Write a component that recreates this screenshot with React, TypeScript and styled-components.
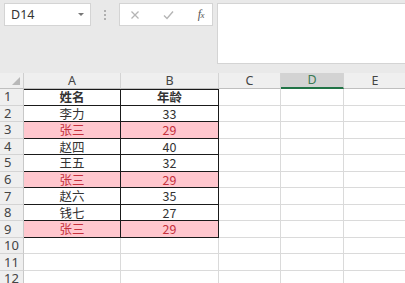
import React from 'react';
import styled, { createGlobalStyle } from 'styled-components';

const GlobalStyle = createGlobalStyle`
  html, body {
    margin: 0;
    padding: 0;
    background: #ffffff;
    overflow: hidden;
  }
  * { box-sizing: border-box; }
`;

const Page = styled.div`
  width: 405px;
  height: 283px;
  overflow: hidden;
  background: #e9e9e9;
  font-family: "Noto Sans CJK SC", "Noto Sans", sans-serif;
`;

const Toolbar = styled.div`
  display: flex;
  align-items: flex-start;
  height: 73px;
  padding: 3px 0 0 4px;
`;

const NameBox = styled.div`
  width: 87px;
  height: 23px;
  background: #fff;
  border: 1px solid #d4d4d4;
  display: flex;
  align-items: center;
  justify-content: space-between;
  padding: 0 6px 0 6px;
  font-family: "Noto Sans", sans-serif;
  font-size: 12.5px;
  color: #333;
`;

const Caret = styled.span`
  width: 0;
  height: 0;
  border-left: 3.5px solid transparent;
  border-right: 3.5px solid transparent;
  border-top: 3.5px solid #777;
`;

const Grip = styled.div`
  width: 28px;
  height: 23px;
  display: flex;
  flex-direction: column;
  align-items: center;
  justify-content: center;
  gap: 2px;
`;

const GripDot = styled.span`
  width: 2px;
  height: 2px;
  background: #b0b0b0;
`;

const IconBox = styled.div`
  width: 94px;
  height: 23px;
  background: #fff;
  border: 1px solid #d4d4d4;
  display: flex;
  align-items: center;
  justify-content: space-between;
  padding: 0 8px 0 10px;
  margin-right: 4px;
`;

const Fx = styled.span`
  font-family: "Liberation Serif", serif;
  font-style: italic;
  font-size: 12px;
  color: #555;
  letter-spacing: -0.5px;
  & small { font-size: 9px; }
`;

const FormulaInput = styled.div`
  flex: 1;
  height: 61px;
  background: #fff;
  border: 1px solid #d4d4d4;
  margin-right: -2px;
`;

const Sheet = styled.div`
  display: grid;
  grid-template-columns: 24px 97px 98px 62px 63px 63px;
  grid-template-rows: 16px repeat(12, 16.55px);
  background: #fff;
`;

const Corner = styled.div`
  background: #efefef;
  border-right: 1px solid #cfcfcf;
  border-bottom: 1px solid #bfbfbf;
  position: relative;
  &::after {
    content: '';
    position: absolute;
    right: 3px;
    bottom: 3px;
    width: 0;
    height: 0;
    border-left: 8px solid transparent;
    border-bottom: 8px solid #b8b8b8;
  }
`;

const ColHead = styled.div<{ $active?: boolean }>`
  background: ${p => (p.$active ? '#d3d3d3' : '#efefef')};
  border-right: 1px solid #d4d4d4;
  border-bottom: ${p => (p.$active ? '2px solid #217346' : '1px solid #bfbfbf')};
  display: flex;
  align-items: center;
  justify-content: center;
  font-family: "Noto Sans", sans-serif;
  font-size: 12.5px;
  line-height: 1;
  padding-top: 1px;
  color: ${p => (p.$active ? '#3b7a55' : '#444')};
`;

const RowHead = styled.div`
  background: #efefef;
  border-right: 1px solid #c8c8c8;
  border-bottom: 1px solid #d4d4d4;
  display: flex;
  align-items: center;
  padding-left: 4px;
  font-family: "Noto Sans", sans-serif;
  font-size: 13px;
  line-height: 1;
  color: #444;
`;

const Cell = styled.div<{ $boxed?: boolean; $hit?: boolean; $bold?: boolean; $top?: boolean }>`
  background: ${p => (p.$hit ? '#ffc7ce' : '#fff')};
  color: ${p => (p.$hit ? '#c5303c' : '#333')};
  font-weight: ${p => (p.$bold ? 700 : 400)};
  border-right: 1px solid ${p => (p.$boxed ? '#1a1a1a' : '#dadada')};
  border-bottom: 1px solid ${p => (p.$boxed ? '#1a1a1a' : '#dadada')};
  box-shadow: ${p => (p.$top ? 'inset 0 1px 0 #1a1a1a' : 'none')};
  display: flex;
  align-items: center;
  justify-content: center;
  font-size: 12.5px;
  line-height: 1;
  padding-top: 1px;
`;

const columns = ['A', 'B', 'C', 'D', 'E'];

const people: [string, string][] = [
  ['姓名', '年龄'],
  ['李力', '33'],
  ['张三', '29'],
  ['赵四', '40'],
  ['王五', '32'],
  ['张三', '29'],
  ['赵六', '35'],
  ['钱七', '27'],
  ['张三', '29'],
];

export default function App() {
  const rows = Array.from({ length: 12 }, (_, i) => i);

  return (
    <Page>
      <GlobalStyle />
      <Toolbar>
        <NameBox>
          <span>D14</span>
          <Caret />
        </NameBox>
        <Grip>
          <GripDot />
          <GripDot />
          <GripDot />
        </Grip>
        <IconBox>
          <svg width="10" height="10" viewBox="0 0 10 10">
            <path d="M1.5 1.5 L8.5 8.5 M8.5 1.5 L1.5 8.5" stroke="#b5b5b5" strokeWidth="1.3" fill="none" />
          </svg>
          <svg width="11" height="10" viewBox="0 0 11 10">
            <path d="M1 5.5 L4 8.5 L10 1.5" stroke="#b5b5b5" strokeWidth="1.4" fill="none" />
          </svg>
          <Fx>f<small>x</small></Fx>
        </IconBox>
        <FormulaInput />
      </Toolbar>
      <Sheet>
        <Corner />
        {columns.map(c => (
          <ColHead key={c} $active={c === 'D'}>{c}</ColHead>
        ))}
        {rows.map(i => {
          const data = people[i];
          const hit = data ? data[0] === '张三' : false;
          return (
            <React.Fragment key={i}>
              <RowHead>{i + 1}</RowHead>
              <Cell $boxed={!!data} $hit={hit} $bold={i === 0} $top={i === 0}>{data ? data[0] : ''}</Cell>
              <Cell $boxed={!!data} $hit={hit} $bold={i === 0} $top={i === 0}>{data ? data[1] : ''}</Cell>
              <Cell />
              <Cell />
              <Cell />
            </React.Fragment>
          );
        })}
      </Sheet>
    </Page>
  );
}
